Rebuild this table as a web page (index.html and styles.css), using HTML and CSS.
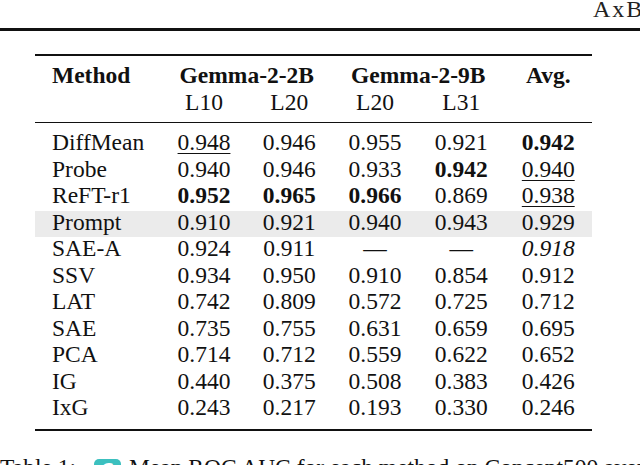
FILE: index.html
```html
<!DOCTYPE html>
<html lang="en">
<head>
<meta charset="utf-8">
<title>AxBench Table 1</title>
<link rel="stylesheet" href="styles.css">
</head>
<body>
<div class="running-head">AxBench: Steering LLMs? Even Simple Baselines Outperform Sparse Autoencoders</div>

<table class="results">
  <colgroup>
    <col class="c-method">
    <col class="c-a">
    <col class="c-b">
    <col class="c-c">
    <col class="c-d">
    <col class="c-e">
  </colgroup>
  <thead>
    <tr class="head-top">
      <th class="method">Method</th>
      <th colspan="2">Gemma-2-2B</th>
      <th colspan="2">Gemma-2-9B</th>
      <th>Avg.</th>
    </tr>
    <tr class="head-sub">
      <td class="method"></td>
      <td>L10</td>
      <td>L20</td>
      <td>L20</td>
      <td>L31</td>
      <td></td>
    </tr>
  </thead>
  <tbody>
    <tr class="first">
      <td class="method">DiffMean</td>
      <td><span class="ul">0.948</span></td>
      <td>0.946</td>
      <td>0.955</td>
      <td>0.921</td>
      <td><b>0.942</b></td>
    </tr>
    <tr>
      <td class="method">Probe</td>
      <td>0.940</td>
      <td>0.946</td>
      <td>0.933</td>
      <td><b>0.942</b></td>
      <td><span class="ul">0.940</span></td>
    </tr>
    <tr>
      <td class="method">ReFT-r1</td>
      <td><b>0.952</b></td>
      <td><b>0.965</b></td>
      <td><b>0.966</b></td>
      <td>0.869</td>
      <td><span class="ul">0.938</span></td>
    </tr>
    <tr class="shaded">
      <td class="method">Prompt</td>
      <td>0.910</td>
      <td>0.921</td>
      <td>0.940</td>
      <td>0.943</td>
      <td>0.929</td>
    </tr>
    <tr class="after-shaded">
      <td class="method">SAE-A</td>
      <td>0.924</td>
      <td>0.911</td>
      <td>&mdash;</td>
      <td>&mdash;</td>
      <td><i>0.918</i></td>
    </tr>
    <tr>
      <td class="method">SSV</td>
      <td>0.934</td>
      <td>0.950</td>
      <td>0.910</td>
      <td>0.854</td>
      <td>0.912</td>
    </tr>
    <tr>
      <td class="method">LAT</td>
      <td>0.742</td>
      <td>0.809</td>
      <td>0.572</td>
      <td>0.725</td>
      <td>0.712</td>
    </tr>
    <tr>
      <td class="method">SAE</td>
      <td>0.735</td>
      <td>0.755</td>
      <td>0.631</td>
      <td>0.659</td>
      <td>0.695</td>
    </tr>
    <tr>
      <td class="method">PCA</td>
      <td>0.714</td>
      <td>0.712</td>
      <td>0.559</td>
      <td>0.622</td>
      <td>0.652</td>
    </tr>
    <tr>
      <td class="method">IG</td>
      <td>0.440</td>
      <td>0.375</td>
      <td>0.508</td>
      <td>0.383</td>
      <td>0.426</td>
    </tr>
    <tr class="last">
      <td class="method">IxG</td>
      <td>0.243</td>
      <td>0.217</td>
      <td>0.193</td>
      <td>0.330</td>
      <td>0.246</td>
    </tr>
  </tbody>
</table>

<p class="caption">Table 1: <span class="badge">C</span>Mean ROC AUC for each method on Concept500 averaged over all concepts.</p>
</body>
</html>
```

FILE: styles.css
```css
html, body {
  margin: 0;
  padding: 0;
  background: #ffffff;
}

body {
  width: 640px;
  height: 465px;
  overflow: hidden;
  color: #111111;
  font-family: "Liberation Serif", "Times New Roman", serif;
}

.running-head {
  height: 28px;
  padding-left: 593px;
  font-size: 24px;
  line-height: 19px;
  letter-spacing: 2px;
  white-space: nowrap;
  overflow: hidden;
  color: #222222;
  border-bottom: 3px solid #111111;
}

.results {
  margin: 23px 0 0 35px;
  width: 557px;
  table-layout: fixed;
  border-collapse: separate;
  border-spacing: 0;
  font-size: 23.5px;
  line-height: 26.5px;
}

.c-method { width: 126.5px; }
.c-a { width: 85px; }
.c-b { width: 85.5px; }
.c-c { width: 86px; }
.c-d { width: 86.5px; }
.c-e { width: 87.5px; }

.results th,
.results td {
  padding: 0;
  text-align: center;
  vertical-align: top;
  white-space: nowrap;
}

.results th {
  font-weight: bold;
}

.results .method {
  text-align: left;
  padding-left: 17px;
}

.head-top th {
  border-top: 2px solid #111111;
  padding-top: 6px;
}

.head-sub td {
  padding-bottom: 7px;
  border-bottom: 1px solid #111111;
}

.results tbody tr.first td {
  padding-top: 6px;
}

.results tbody tr.last td {
  padding-bottom: 8px;
  border-bottom: 2px solid #111111;
}

.results b {
  font-weight: bold;
}

.ul {
  text-decoration: underline;
  text-decoration-thickness: 1px;
  text-underline-offset: 3px;
}

.shaded td {
  background: linear-gradient(to bottom, transparent 0, transparent 2px, #ebebeb 2px);
}

.after-shaded td {
  background: linear-gradient(to bottom, #ebebeb 0, #ebebeb 2px, transparent 2px);
}

.caption {
  margin: 23px 0 0 0;
  font-size: 23.5px;
  line-height: 26.5px;
  white-space: nowrap;
  overflow: hidden;
}

.badge {
  display: inline-block;
  overflow: hidden;
  width: 27px;
  height: 22px;
  margin: 0 8px 0 12px;
  vertical-align: -6px;
  border-radius: 5px;
  background: #3cc0bf;
  color: #ffffff;
  font-family: "DejaVu Sans", sans-serif;
  font-weight: bold;
  font-size: 17px;
  line-height: 22px;
  text-align: center;
}
```
